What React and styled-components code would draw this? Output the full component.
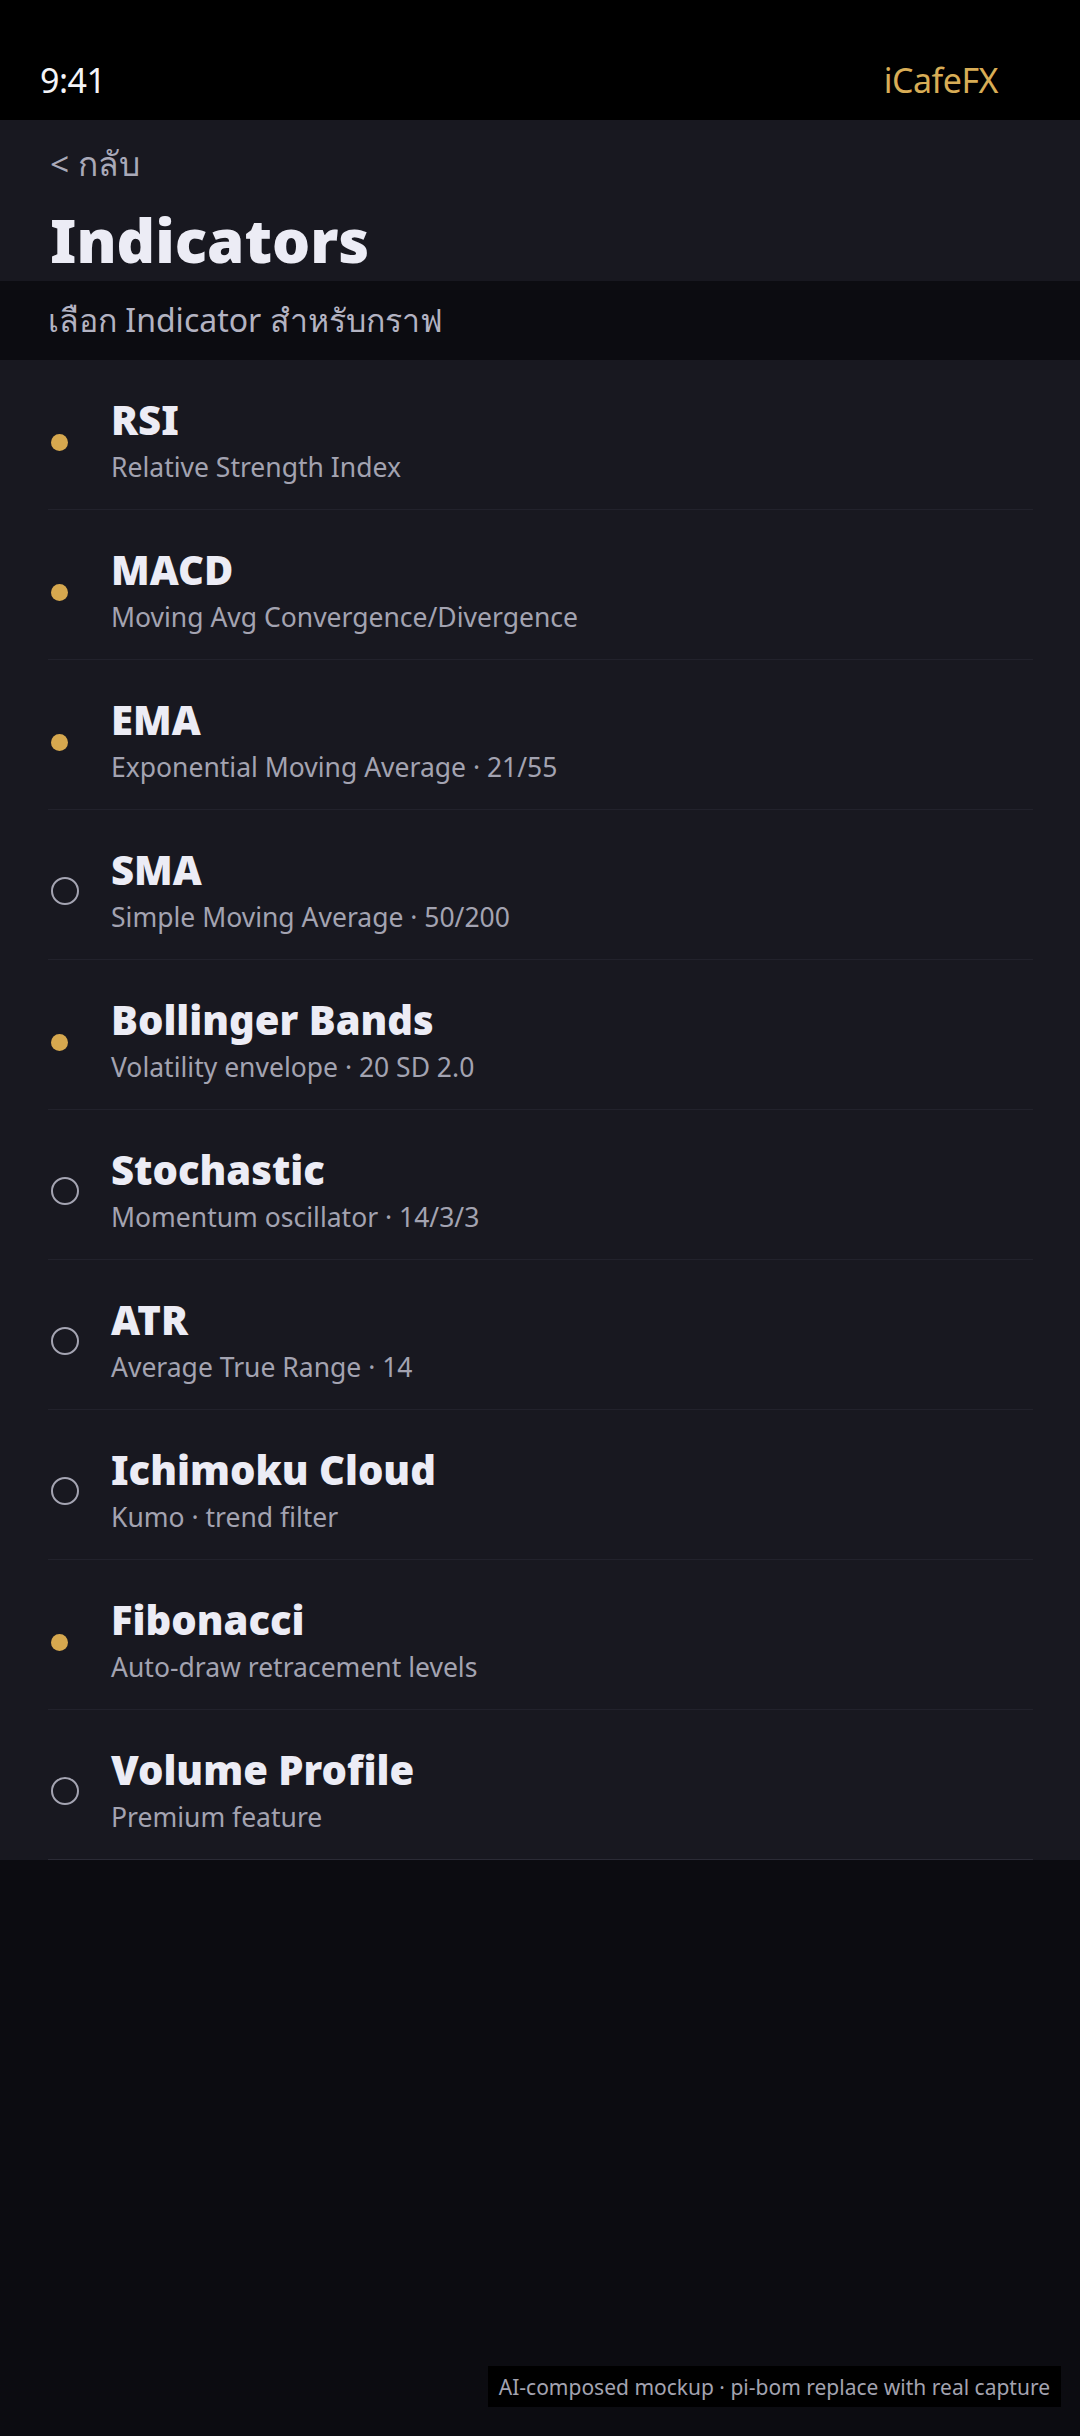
import React from "react";
import styled, { createGlobalStyle } from "styled-components";

const GlobalStyle = createGlobalStyle`
  html, body { margin: 0; padding: 0; background: #0c0c11; }
  body { font-family: "Noto Sans", "Open Sans", sans-serif; -webkit-font-smoothing: antialiased; }
  * { box-sizing: border-box; }
`;

const Screen = styled.div`
  position: relative;
  min-height: 100vh;
  background: #0c0c11;
  display: flex;
  flex-direction: column;
`;

const StatusBar = styled.div`
  height: 120px;
  background: #000;
  display: flex;
  align-items: center;
  justify-content: space-between;
  padding: 40px 82px 0 40px;
`;

const Clock = styled.span`
  color: #f4f4f8;
  font-size: 34px;
  font-weight: 400;
  letter-spacing: -0.5px;
`;

const Brand = styled.span`
  color: #d8ad56;
  font-size: 34px;
  font-weight: 400;
  letter-spacing: -0.5px;
`;

const Header = styled.header`
  background: #181820;
  padding: 20px 50px 0;
  height: 161px;
  display: flex;
  flex-direction: column;
`;

const Back = styled.a`
  color: #a9a9b8;
  font-size: 33.5px;
  line-height: 46px;
  text-decoration: none;
`;

const Title = styled.h1`
  margin: 17px 0 0;
  color: #ececf5;
  font-size: 60px;
  font-weight: 900;
  line-height: 74px;
`;

const SubBand = styled.div`
  height: 79px;
  background: #0c0c11;
  padding: 0 48px;
  display: flex;
  align-items: center;
  color: #b3b3c2;
  font-size: 32px;
`;

const List = styled.ul`
  list-style: none;
  margin: 0;
  padding: 0 47px 0 48px;
  background: #181820;
`;

const Row = styled.li`
  display: flex;
  align-items: center;
  padding: 36px 0 24px;
  border-bottom: 1px solid ${(p) => (p.$last ? "#2b2b36" : "#22222c")};
`;

const MarkerSlot = styled.div`
  width: 63px;
  flex: none;
  display: flex;
  align-items: center;
  padding-left: 3px;
`;

const Marker = styled.span`
  display: block;
  width: ${(p) => (p.$on ? "17px" : "28px")};
  height: ${(p) => (p.$on ? "17px" : "28px")};
  border-radius: 50%;
  background: ${(p) => (p.$on ? "#d6a84f" : "transparent")};
  border: ${(p) => (p.$on ? "none" : "2px solid #a4a4b2")};
  margin-top: ${(p) => (p.$on ? "3px" : "0")};
`;

const Texts = styled.div`
  display: flex;
  flex-direction: column;
  gap: 6px;
`;

const Name = styled.div`
  color: #ececf5;
  font-size: 40px;
  font-weight: 900;
  line-height: 48px;
`;

const Desc = styled.div`
  color: #a3a3b1;
  font-size: 26.5px;
  line-height: 35px;
`;

const Watermark = styled.div`
  position: absolute;
  right: 19px;
  bottom: 29px;
  background: #000;
  color: #a3a3b0;
  font-size: 21px;
  height: 41px;
  padding: 0 11px;
  display: flex;
  align-items: center;
`;

const items = [
  { name: "RSI", desc: "Relative Strength Index", on: true },
  { name: "MACD", desc: "Moving Avg Convergence/Divergence", on: true },
  { name: "EMA", desc: "Exponential Moving Average · 21/55", on: true },
  { name: "SMA", desc: "Simple Moving Average · 50/200", on: false },
  { name: "Bollinger Bands", desc: "Volatility envelope · 20 SD 2.0", on: true },
  { name: "Stochastic", desc: "Momentum oscillator · 14/3/3", on: false },
  { name: "ATR", desc: "Average True Range · 14", on: false },
  { name: "Ichimoku Cloud", desc: "Kumo · trend filter", on: false },
  { name: "Fibonacci", desc: "Auto-draw retracement levels", on: true },
  { name: "Volume Profile", desc: "Premium feature", on: false },
];

export default function App() {
  return (
    <Screen>
      <GlobalStyle />
      <StatusBar>
        <Clock>9:41</Clock>
        <Brand>iCafeFX</Brand>
      </StatusBar>
      <Header>
        <Back href="#">&lt; กลับ</Back>
        <Title>Indicators</Title>
      </Header>
      <SubBand>เลือก Indicator สำหรับกราฟ</SubBand>
      <List>
        {items.map((it, i) => (
          <Row key={it.name} $last={i === items.length - 1}>
            <MarkerSlot>
              <Marker $on={it.on} />
            </MarkerSlot>
            <Texts>
              <Name>{it.name}</Name>
              <Desc>{it.desc}</Desc>
            </Texts>
          </Row>
        ))}
      </List>
      <Watermark>AI-composed mockup · pi-bom replace with real capture</Watermark>
    </Screen>
  );
}
